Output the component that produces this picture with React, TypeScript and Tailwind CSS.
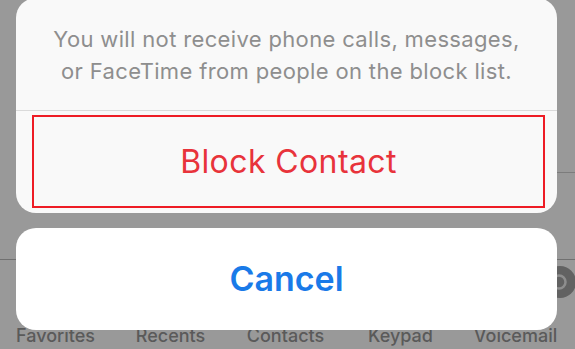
import React from 'react';

const tabs = ['Favorites', 'Recents', 'Contacts', 'Keypad', 'Voicemail'];

export default function App() {
  return (
    <div
      className="relative w-[575px] h-[349px] overflow-hidden bg-[#999999]"
      style={{ fontFamily: 'Inter, "Noto Sans", sans-serif' }}
    >
      {/* dimmed page underneath */}
      <div className="flex flex-col h-full">
        <div className="h-[173px] ml-[60px] border-b border-[#7c7c7c]" />
        <div className="h-[86px]" />
        <div className="relative flex-1 border-t border-[#707070]">
          <div className="grid grid-cols-5 pt-[65px]">
            {tabs.map((t) => (
              <span
                key={t}
                className="text-center text-[18px] leading-[22px] font-medium text-[#5a5a5a] -translate-x-[2px]"
              >
                {t}
              </span>
            ))}
          </div>
          {/* voicemail badge peeking out */}
          <svg
            className="absolute left-[540px] top-[2px]"
            width="40"
            height="40"
            viewBox="0 0 40 40"
          >
            <circle cx="20" cy="20" r="16" fill="#626262" />
            <circle cx="19" cy="20" r="6.5" fill="none" stroke="#8e8e8e" strokeWidth="2.5" />
          </svg>
        </div>
      </div>

      {/* action sheet */}
      <div className="absolute inset-x-0 top-[-2px] flex flex-col gap-[15px] pl-[16px] pr-[18px]">
        <div className="bg-[#f9f9f9] rounded-[20px] flex flex-col">
          <p className="pt-[25px] pb-[23px] text-center text-[22px] leading-[32px] tracking-[0.35px] text-[#8e8e8e]">
            You will not receive phone calls, messages,
            <br />
            or FaceTime from people on the block list.
          </p>
          <div className="h-px bg-[#dadada]" />
          <div className="pt-[4px] pb-[5px] pl-[16px] pr-[12px]">
            <div className="h-[93px] border-2 border-[#ee1c25] flex items-center justify-center">
              <span className="text-[32px] leading-none tracking-[0.4px] text-[#e8333b]">Block Contact</span>
            </div>
          </div>
        </div>
        <div className="bg-white rounded-[20px] h-[102px] flex items-center justify-center">
          <span className="text-[34px] leading-none font-semibold text-[#1a7ae8]">Cancel</span>
        </div>
      </div>
    </div>
  );
}
